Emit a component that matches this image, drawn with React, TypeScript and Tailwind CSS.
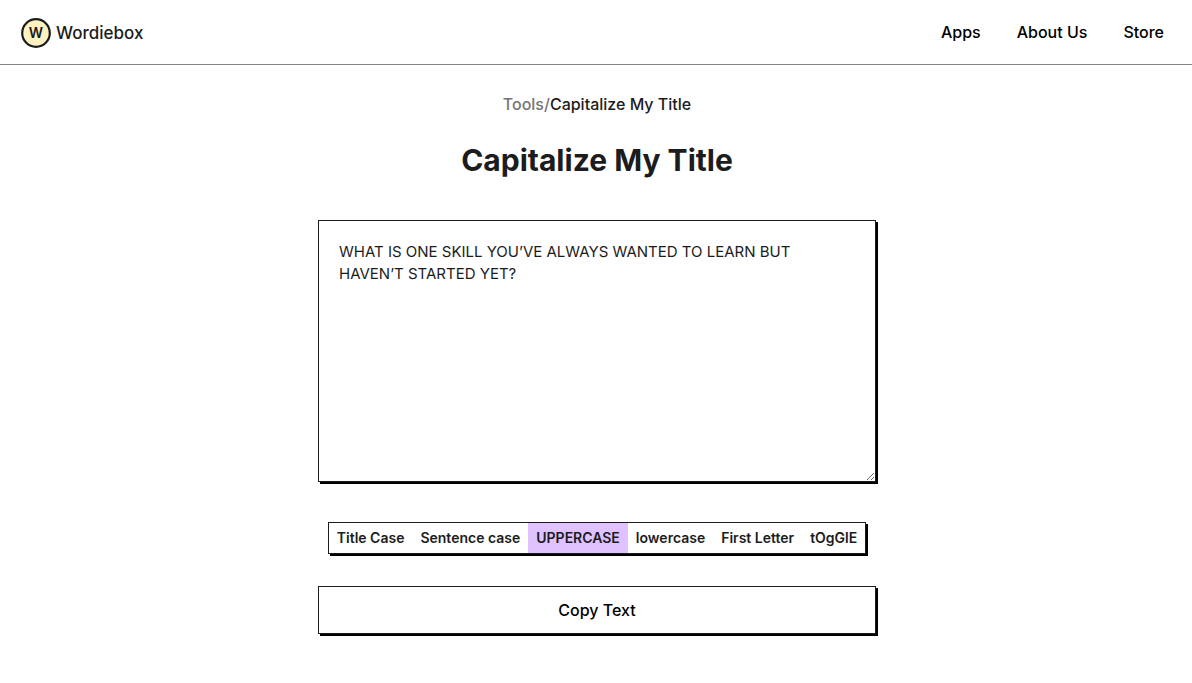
import { useState } from "react";

type Mode = "title" | "sentence" | "upper" | "lower" | "first" | "toggle";

const modes: { id: Mode; label: string }[] = [
  { id: "title", label: "Title Case" },
  { id: "sentence", label: "Sentence case" },
  { id: "upper", label: "UPPERCASE" },
  { id: "lower", label: "lowercase" },
  { id: "first", label: "First Letter" },
  { id: "toggle", label: "tOgGlE" },
];

const minorWords = ["a", "an", "and", "but", "or", "the", "to", "of", "in", "on", "at", "for"];

function convert(text: string, mode: Mode): string {
  const lower = text.toLowerCase();
  switch (mode) {
    case "upper":
      return text.toUpperCase();
    case "lower":
      return lower;
    case "sentence":
      return lower.replace(/(^\s*|[.!?]\s+)\S/g, (m) => m.toUpperCase());
    case "first":
      return lower.replace(/(^|\s)\S/g, (m) => m.toUpperCase());
    case "title":
      return lower.replace(/\S+/g, (w, i: number) =>
        i > 0 && minorWords.includes(w) ? w : w[0].toUpperCase() + w.slice(1),
      );
    case "toggle":
      return [...lower].map((c, i) => (i % 2 ? c.toUpperCase() : c)).join("");
  }
}

function Logo() {
  return (
    <a href="#" className="flex items-center gap-1 pt-px text-[#1c1c1c]">
      <svg viewBox="0 0 32 32" className="size-8" aria-hidden="true">
        <circle cx="16" cy="16" r="13.8" fill="#fff2c2" stroke="#1c1c1c" strokeWidth="2.2" />
        <text x="16" y="20.8" textAnchor="middle" fill="#1c1c1c" className="text-[14px] font-semibold">
          W
        </text>
      </svg>
      <span className="text-[17px] leading-6 font-medium">Wordiebox</span>
    </a>
  );
}

export default function App() {
  const [mode, setMode] = useState<Mode>("upper");
  const [text, setText] = useState("WHAT IS ONE SKILL YOU’VE ALWAYS WANTED TO LEARN BUT HAVEN’T STARTED YET?");

  return (
    <div className="min-h-screen bg-white font-['Inter','Liberation_Sans',sans-serif] text-[#1c1c1c]">
      <header className="flex h-[65px] items-center justify-between border-b border-[#858585] pr-7 pl-5">
        <Logo />
        <nav className="flex gap-9 text-base leading-6 font-medium text-black">
          <a href="#apps">Apps</a>
          <a href="#about">About Us</a>
          <a href="#store">Store</a>
        </nav>
      </header>

      <main className="mx-auto flex w-full max-w-[608px] flex-col items-center pt-7 pr-6 pb-12 pl-[26px]">
        <nav aria-label="Breadcrumb" className="text-base leading-[23px] font-medium">
          <a href="#tools" className="text-[#757575]">
            Tools
          </a>
          <span className="text-[#757575]">/</span>
          <span>Capitalize My Title</span>
        </nav>
        <h1 className="mt-6 text-[30px] leading-10 font-bold">Capitalize My Title</h1>

        <textarea
          aria-label="Text to convert"
          value={text}
          onChange={(e) => setText(e.target.value)}
          className="mt-10 block h-[262px] w-full resize border border-[#1c1c1c] bg-white p-5 text-[15px] leading-[22px] shadow-[2px_2px_0_#000] outline-none"
        />

        <div className="mt-10 flex h-8 border border-[#1c1c1c] shadow-[2px_2px_0_#000]">
          {modes.map(({ id, label }) => (
            <button
              key={id}
              type="button"
              aria-pressed={mode === id}
              onClick={() => {
                setMode(id);
                setText(convert(text, id));
              }}
              className={`px-2 text-sm font-semibold whitespace-nowrap ${
                mode === id ? "bg-[#dfc2ff]" : "bg-white"
              }`}
            >
              {label}
            </button>
          ))}
        </div>

        <button
          type="button"
          onClick={() => navigator.clipboard?.writeText(text)}
          className="mt-8 h-12 w-full border border-[#1c1c1c] bg-white text-base font-medium text-black shadow-[2px_2px_0_#000]"
        >
          Copy Text
        </button>
      </main>
    </div>
  );
}
